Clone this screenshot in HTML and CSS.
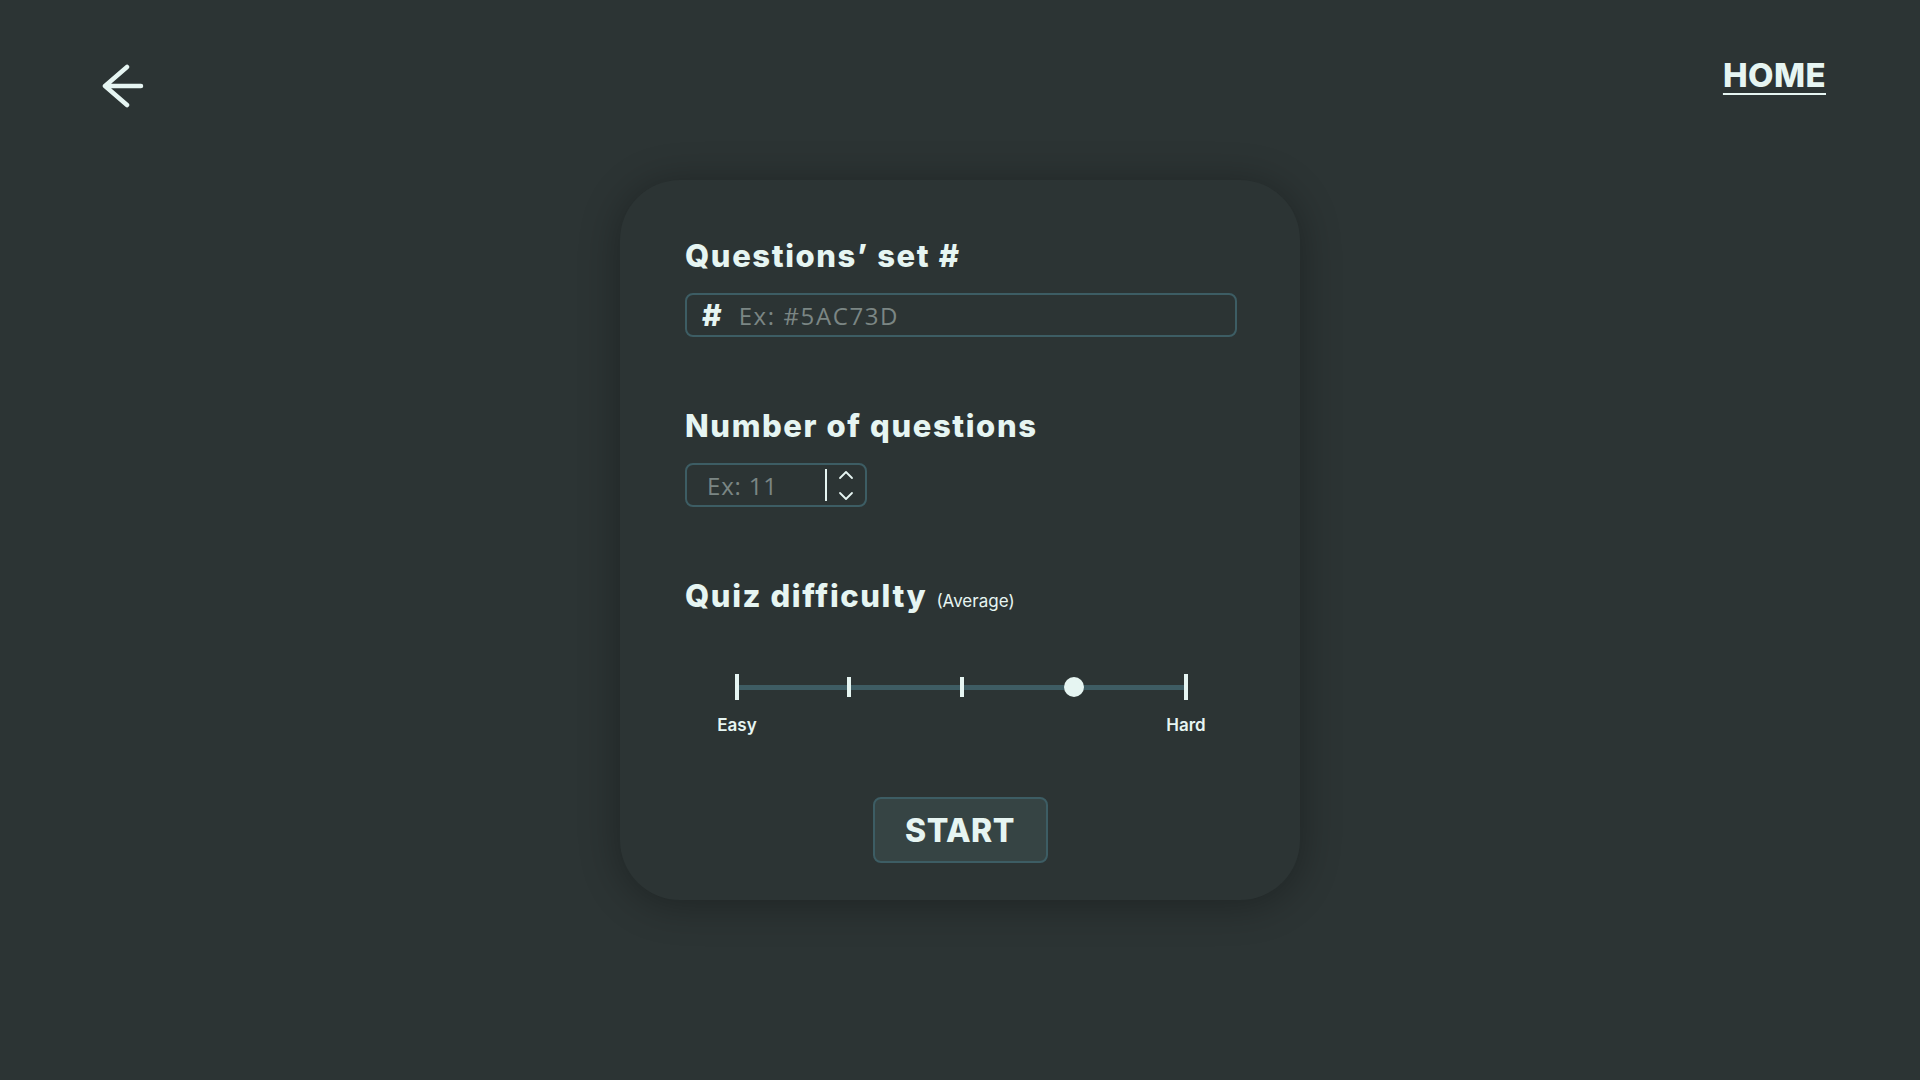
FILE: index.html
```html
<!DOCTYPE html>
<html lang="en">
<head>
<meta charset="utf-8">
<title>Quiz setup</title>
<link rel="stylesheet" href="styles.css">
</head>
<body>
<div class="page">
  <header class="topbar">
    <a class="back" href="#" aria-label="Back">
      <svg width="44" height="44" viewBox="0 0 44 44" fill="none" stroke="#e6f5f2" stroke-width="4.5" stroke-linecap="round" stroke-linejoin="round">
        <path d="M40 22 H4 M26 3 L4 22 L26 41"/>
      </svg>
    </a>
    <a class="home" href="#">HOME</a>
  </header>
  <main class="main">
    <section class="card">
      <h2 class="title">Questions’ set #</h2>
      <label class="field field-wide">
        <span class="hash">#</span>
        <input class="text-input" type="text" placeholder="Ex: #5AC73D">
      </label>

      <h2 class="title title-gap">Number of questions</h2>
      <div class="field field-num">
        <input class="num-input" type="text" placeholder="Ex: 11">
        <span class="caret"></span>
        <span class="spin">
          <svg width="16" height="32" viewBox="0 0 16 32" fill="none" stroke="#e6f5f2" stroke-width="1.8" stroke-linecap="round" stroke-linejoin="round">
            <path d="M2 9 L8 3 L14 9"/>
            <path d="M2 24 L8 30 L14 24"/>
          </svg>
        </span>
      </div>

      <h2 class="title title-gap">Quiz difficulty<span class="note">(Average)</span></h2>
      <div class="slider">
        <span class="stop"><span class="tick tick-end"></span></span>
        <span class="stop"><span class="tick"></span></span>
        <span class="stop"><span class="tick"></span></span>
        <span class="stop"><span class="thumb"></span></span>
        <span class="stop"><span class="tick tick-end"></span></span>
      </div>
      <div class="slider-labels">
        <span class="slabel">Easy</span>
        <span class="slabel">Hard</span>
      </div>

      <button class="start" type="button">START</button>
    </section>
  </main>
</div>
</body>
</html>
```
FILE: styles.css
```css
* { box-sizing: border-box; }

html, body {
  margin: 0;
  padding: 0;
  background: #2c3434;
  color: #e6f5f2;
  font-family: Inter, "Open Sans", sans-serif;
}

.page {
  width: 1920px;
  height: 1080px;
  display: flex;
  flex-direction: column;
}

.topbar {
  height: 180px;
  display: flex;
  justify-content: space-between;
  align-items: flex-start;
  padding: 55px 94px 0 101px;
}

.back {
  display: block;
  width: 44px;
  height: 44px;
  margin-top: 9px;
}
.back svg { display: block; }

.home {
  color: #e6f5f2;
  font-size: 33px;
  line-height: 40px;
  font-weight: 800;
  text-decoration: underline;
  text-decoration-thickness: 2px;
  text-underline-offset: 6px;
  letter-spacing: 0.4px;
}

.main {
  flex: 1;
  display: flex;
  justify-content: center;
  align-items: flex-start;
}

.card {
  width: 680px;
  height: 720px;
  border-radius: 60px;
  background: #2c3434;
  box-shadow: 0 4px 40px rgba(0, 0, 0, 0.32);
  padding: 58px 63px 0 65px;
  display: flex;
  flex-direction: column;
  align-items: flex-start;
}

.title {
  margin: 0;
  font-size: 31px;
  line-height: 36px;
  font-weight: 800;
  letter-spacing: 1.6px;
  color: #e6f5f2;
  white-space: nowrap;
}

.title-gap { margin-top: 71px; }

.note {
  font-size: 17px;
  font-weight: 400;
  letter-spacing: 0;
  margin-left: 9px;
}

.field {
  margin-top: 19px;
  height: 44px;
  border: 2px solid #3d5d64;
  border-radius: 8px;
  display: flex;
  align-items: center;
}

.field-wide {
  width: 552px;
  padding-left: 15px;
}

.hash {
  font-size: 30px;
  font-weight: 800;
  color: #e6f5f2;
  margin-right: 17px;
  line-height: 1;
}

.text-input, .num-input {
  border: none;
  outline: none;
  background: transparent;
  color: #e6f5f2;
  font-family: "Open Sans", sans-serif;
  font-size: 24px;
  letter-spacing: 1.6px;
  padding: 0;
  height: 36px;
}
.num-input { letter-spacing: 0.8px; }
.text-input { flex: 1; }
.text-input::placeholder, .num-input::placeholder {
  color: #7b8684;
  opacity: 1;
}

.field-num {
  width: 182px;
  padding-left: 20px;
}
.num-input { width: 118px; }

.caret {
  width: 2px;
  height: 32px;
  background: #e6f5f2;
}

.spin {
  margin-left: 11px;
  display: flex;
}
.spin svg { display: block; }

.slider {
  position: relative;
  margin-top: 55px;
  margin-left: 42px;
  width: 469px;
  height: 26px;
  display: flex;
  justify-content: space-between;
  align-items: center;
}
.slider::before {
  content: "";
  position: absolute;
  left: 10px;
  right: 10px;
  top: 11px;
  height: 5px;
  background: #3e5c63;
}

.stop {
  position: relative;
  width: 20px;
  height: 26px;
  display: flex;
  justify-content: center;
  align-items: center;
}

.tick {
  width: 4px;
  height: 20px;
  background: #e6f5f2;
}
.tick-end { height: 26px; }

.thumb {
  width: 20px;
  height: 20px;
  border-radius: 50%;
  background: #e6f5f2;
}

.slider-labels {
  margin-top: 15px;
  margin-left: 22px;
  width: 509px;
  display: flex;
  justify-content: space-between;
}
.slabel {
  width: 60px;
  text-align: center;
  font-size: 17px;
  line-height: 20px;
  font-weight: 600;
  color: #e6f5f2;
}

.start {
  align-self: center;
  margin-top: 62px;
  margin-left: -2px;
  width: 175px;
  height: 66px;
  border: 2px solid #3d5d64;
  border-radius: 8px;
  background: #364444;
  color: #e6f5f2;
  font-family: Inter, "Open Sans", sans-serif;
  font-size: 32px;
  font-weight: 800;
  letter-spacing: 0.5px;
  padding: 0;
}
```
